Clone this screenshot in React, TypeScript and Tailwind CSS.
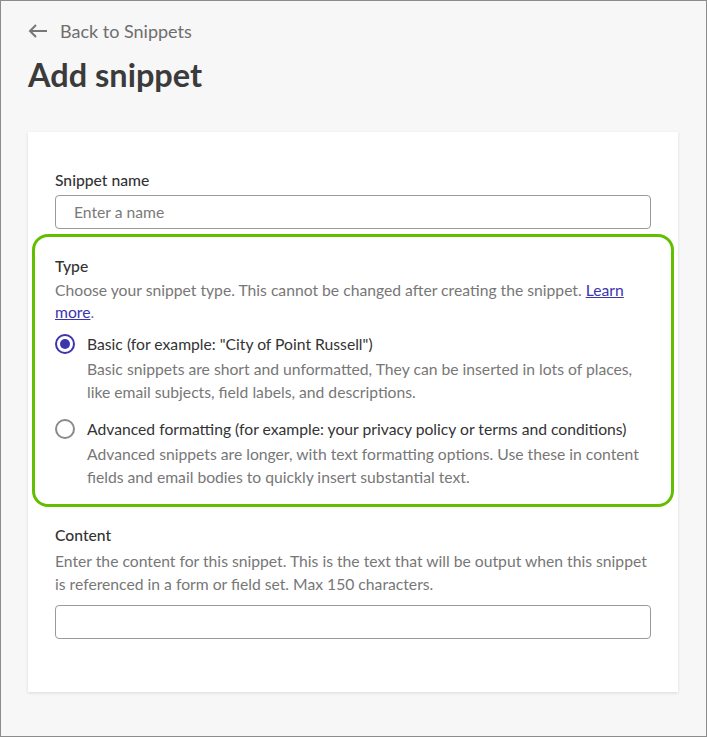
import React from "react";

const font = { fontFamily: "Lato, 'Noto Sans', sans-serif" };

function Radio({ checked }: { checked: boolean }) {
  return checked ? (
    <span className="mt-[1px] flex size-5 shrink-0 items-center justify-center rounded-full border-2 border-[#3a34ad] bg-white">
      <span className="size-[10px] rounded-full bg-[#3a34ad]" />
    </span>
  ) : (
    <span className="mt-[1px] size-5 shrink-0 rounded-full border-2 border-[#8a8a8a] bg-white" />
  );
}

function TypeOption({
  checked,
  title,
  description,
}: {
  checked: boolean;
  title: string;
  description: string;
}) {
  return (
    <div className="flex gap-3">
      <Radio checked={checked} />
      <div>
        <div className="text-[15.7px] leading-[22px] text-[#333]">{title}</div>
        <p className="mt-[3px] text-[15.7px] leading-[23px] text-[#777]">{description}</p>
      </div>
    </div>
  );
}

export default function App() {
  return (
    <div
      className="min-h-[737px] border border-[#8c8c8c] bg-[#f7f7f7] pt-[19px] pr-[28px] pb-[43px] pl-[27px]"
      style={font}
    >
      <a href="#" className="flex items-center gap-[12px] text-[18px] leading-[22px] text-[#6e6e6e]">
        <svg width="20" height="14" viewBox="0 0 20 14" fill="none" stroke="#777" strokeWidth="2">
          <path d="M19 7H2M8 1L2 7l6 6" />
        </svg>
        Back to Snippets
      </a>
      <h1 className="mt-[13px] text-[32.5px] leading-[40px] font-bold text-[#3b3b3b]">Add snippet</h1>

      <div className="mt-[37px] bg-white px-[27px] pt-[37px] pb-[53px] shadow-[0_1px_3px_rgba(0,0,0,0.12)]">
        <label className="block text-[15.7px] leading-[22px] font-medium text-[#333]">Snippet name</label>
        <input
          placeholder="Enter a name"
          className="mt-[4px] block h-[34px] w-full rounded-[4px] border border-[#9a9a9a] px-[18px] text-[15.7px] text-[#333] outline-none placeholder:text-[#7a7a7a]"
        />

        <div className="mx-[-23px] mt-[5px] rounded-[16px] border-[3px] border-[#62bf00] pt-[18px] pr-[19px] pb-[15px] pl-[20px]">
          <div className="text-[15.7px] leading-[22px] font-medium text-[#333]">Type</div>
          <p className="mt-[2px] text-[15.7px] leading-[22px] text-[#777]">
            Choose your snippet type. This cannot be changed after creating the snippet.{" "}
            <a href="#" className="text-[#3a34ad] underline">
              Learn more
            </a>
            .
          </p>
          <div className="mt-[10px] flex flex-col gap-[14px]">
            <TypeOption
              checked
              title={'Basic (for example: "City of Point Russell")'}
              description="Basic snippets are short and unformatted, They can be inserted in lots of places, like email subjects, field labels, and descriptions."
            />
            <TypeOption
              checked={false}
              title="Advanced formatting (for example: your privacy policy or terms and conditions)"
              description="Advanced snippets are longer, with text formatting options. Use these in content fields and email bodies to quickly insert substantial text."
            />
          </div>
        </div>

        <label className="mt-[17px] block text-[15.7px] leading-[22px] font-medium text-[#333]">Content</label>
        <p className="mt-[4px] text-[15.7px] leading-[23px] text-[#777]">
          Enter the content for this snippet. This is the text that will be output when this snippet is referenced in a form or field set. Max 150 characters.
        </p>
        <input className="mt-[9px] block h-[34px] w-full rounded-[4px] border border-[#9a9a9a] px-[18px] text-[15.7px] outline-none" />
      </div>
    </div>
  );
}
